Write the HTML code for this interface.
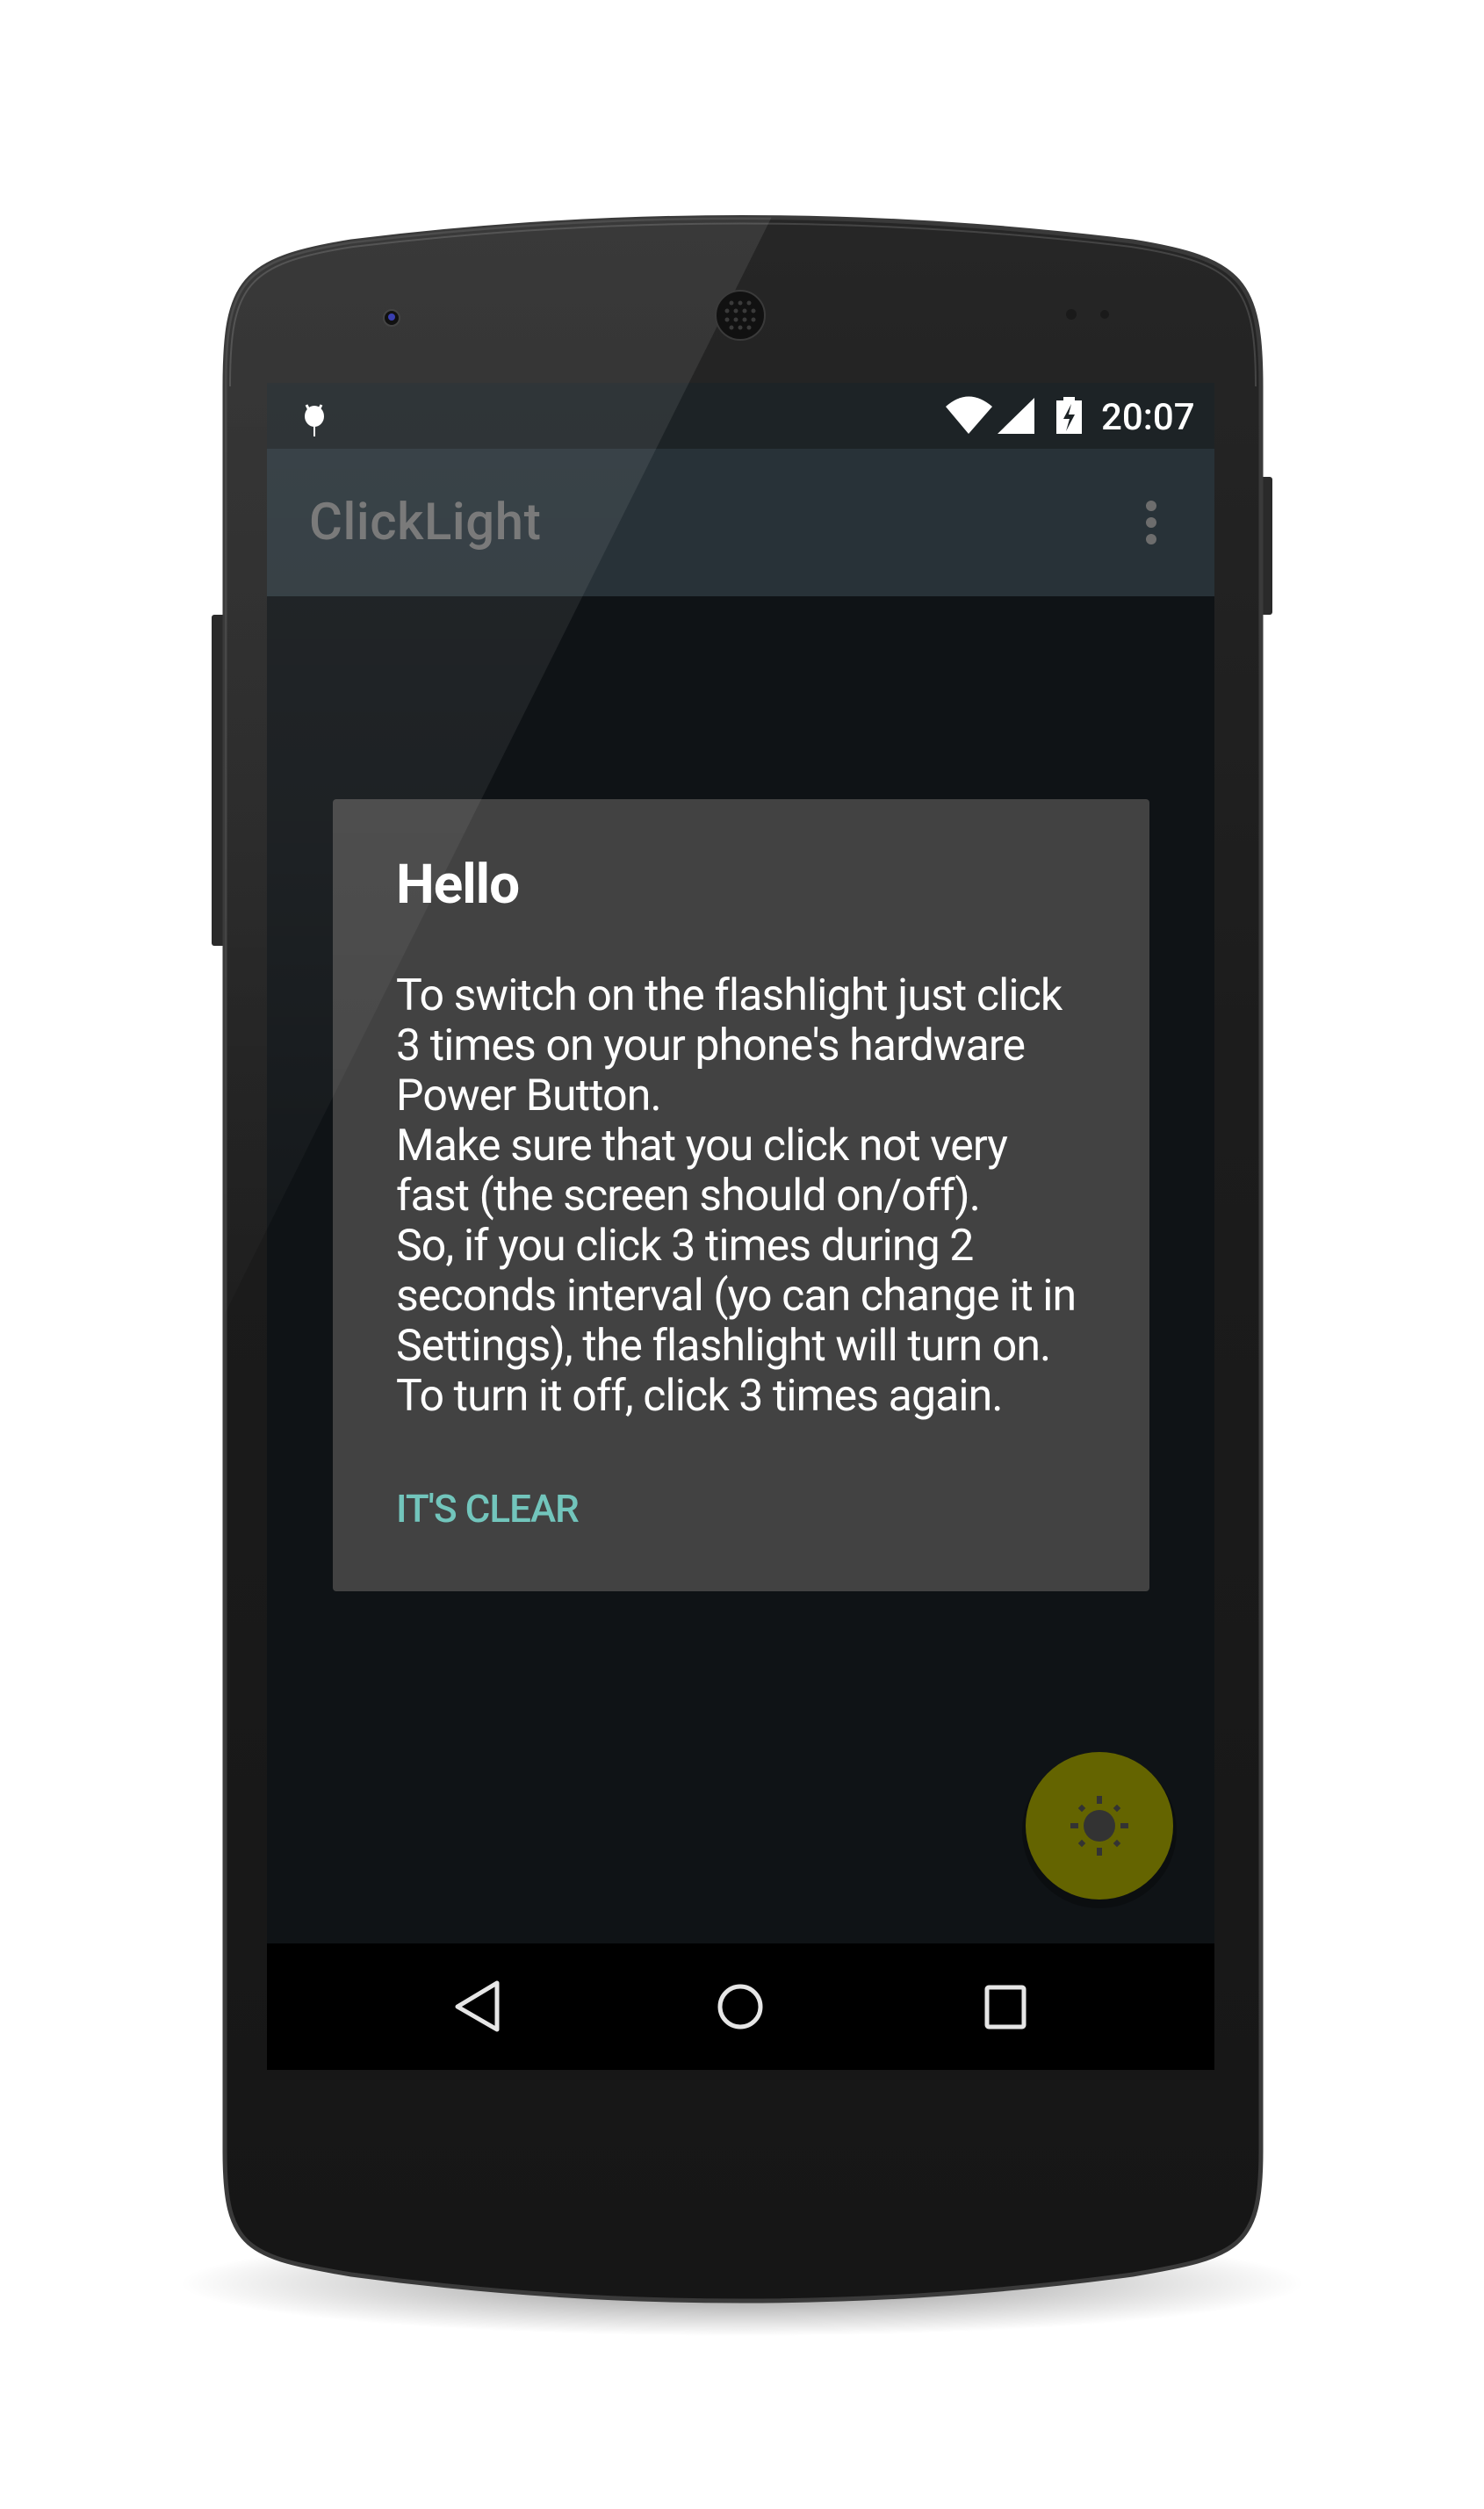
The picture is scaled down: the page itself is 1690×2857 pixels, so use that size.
<!DOCTYPE html>
<html><head><meta charset="utf-8"><style>
html,body{margin:0;padding:0;background:#fff;}
body{width:1690px;height:2857px;position:relative;overflow:hidden;font-family:"Roboto","Liberation Sans",sans-serif;}
.abs{position:absolute;}
.txt{position:absolute;white-space:nowrap;color:#fff;}
</style></head><body>
<svg class="abs" style="left:0;top:0" width="1690" height="2857" viewBox="0 0 1690 2857">
<defs>
<radialGradient id="sh" cx="0.5" cy="0.5" r="0.5">
<stop offset="0" stop-color="#000" stop-opacity="0.45"/>
<stop offset="1" stop-color="#000" stop-opacity="0"/>
</radialGradient>
<linearGradient id="body" x1="0" y1="0" x2="0" y2="1">
<stop offset="0" stop-color="#262626"/>
<stop offset="0.4" stop-color="#1c1c1c"/>
<stop offset="1" stop-color="#161616"/>
</linearGradient>
<linearGradient id="gl" gradientUnits="userSpaceOnUse" x1="0" y1="240" x2="0" y2="1700">
<stop offset="0" stop-color="#fff" stop-opacity="0.09"/>
<stop offset="0.5" stop-color="#fff" stop-opacity="0.06"/>
<stop offset="1" stop-color="#fff" stop-opacity="0"/>
</linearGradient>
<clipPath id="glare"><polygon points="0,0 1002,0 -120,2250 0,2250"/></clipPath>
</defs>
<ellipse cx="845" cy="2600" rx="640" ry="60" fill="url(#sh)"/>
<rect x="241" y="700" width="16" height="377" rx="3" fill="#2a2a2a"/>
<rect x="1434" y="543" width="15" height="157" rx="3" fill="#2a2a2a"/>
<path d="M256,440 C256,320 275,295 400,275 Q845,220 1290,275 C1415,295 1436,320 1436,440 L1436,2450 C1436,2560 1410,2570 1290,2590 Q845,2650 400,2590 C280,2570 256,2560 256,2450 Z" fill="url(#body)" stroke="#3a3a3a" stroke-width="5"/>
<path d="M262,440 C262,325 280,300 402,281 Q845,228 1288,281 C1410,300 1430,325 1430,440" fill="none" stroke="#444" stroke-width="2"/>
<rect x="304" y="436" width="1079" height="75" fill="#1d2326"/>
<rect x="304" y="511" width="1079" height="168" fill="#283238"/>
<rect x="304" y="679" width="1079" height="1534" fill="#0f1316"/>
<rect x="304" y="2213" width="1079" height="144" fill="#000"/>
<rect x="379" y="910" width="930" height="902" rx="4" fill="#424242"/>
<g clip-path="url(#glare)">
<path d="M256,440 C256,320 275,295 400,275 Q845,220 1290,275 L1290,2213 L256,2213 Z" fill="url(#gl)"/>
</g>
<circle cx="446" cy="362" r="9" fill="#111" stroke="#444" stroke-width="2"/>
<circle cx="446" cy="361" r="4" fill="#3a3fb0"/>
<circle cx="843" cy="359" r="28" fill="#111" stroke="#3a3a3a" stroke-width="2"/>
<g fill="#3a3a3a">
<circle cx="833" cy="345" r="2.5"/><circle cx="843" cy="345" r="2.5"/><circle cx="853" cy="345" r="2.5"/>
<circle cx="828" cy="354" r="2.5"/><circle cx="838" cy="354" r="2.5"/><circle cx="848" cy="354" r="2.5"/><circle cx="858" cy="354" r="2.5"/>
<circle cx="828" cy="364" r="2.5"/><circle cx="838" cy="364" r="2.5"/><circle cx="848" cy="364" r="2.5"/><circle cx="858" cy="364" r="2.5"/>
<circle cx="833" cy="373" r="2.5"/><circle cx="843" cy="373" r="2.5"/><circle cx="853" cy="373" r="2.5"/>
</g>
<circle cx="1220" cy="358" r="6" fill="#1a1a1a"/><circle cx="1258" cy="358" r="5" fill="#1a1a1a"/>
<g fill="#fff">
<path d="M349,461 l3,6 M366,461 l-3,6" stroke="#fff" stroke-width="3"/>
<ellipse cx="358" cy="474" rx="11" ry="12"/>
<rect x="357" y="484" width="2" height="13"/>
<path d="M1077,463 Q1103,440 1130,463 L1103,494 Z"/>
<path d="M1136,494 L1178,453 L1178,494 Z"/>
<rect x="1203" y="456" width="29" height="38"/><rect x="1211" y="452" width="13" height="5"/>
</g>
<path d="M1220,460 L1211,477 L1218,477 L1214,491 L1224,472 L1217,472 Z" fill="#1d2326"/>
<g fill="#6d6d6d"><circle cx="1311" cy="576" r="6"/><circle cx="1311" cy="595" r="6"/><circle cx="1311" cy="614" r="6"/></g>
<circle cx="1252" cy="2085" r="88" fill="#000" opacity="0.25"/>
<circle cx="1252" cy="2079" r="84" fill="#646400"/>
<g fill="#333">
<circle cx="1252" cy="2079" r="18"/>
<rect x="1249" y="2045" width="6" height="9"/><rect x="1249" y="2104" width="6" height="9"/>
<rect x="1219" y="2076" width="9" height="6"/><rect x="1276" y="2076" width="9" height="6"/>
<rect x="1229" y="2056" width="6" height="6" transform="rotate(45 1232 2059)"/>
<rect x="1269" y="2056" width="6" height="6" transform="rotate(45 1272 2059)"/>
<rect x="1229" y="2096" width="6" height="6" transform="rotate(45 1232 2099)"/>
<rect x="1269" y="2096" width="6" height="6" transform="rotate(45 1272 2099)"/>
</g>
<path d="M566,2258 L566,2311 L521,2285 Z" fill="none" stroke="#e6e6e6" stroke-width="5" stroke-linejoin="round"/>
<circle cx="843" cy="2285" r="23" fill="none" stroke="#e6e6e6" stroke-width="5"/>
<rect x="1124" y="2263" width="42" height="45" rx="2" fill="none" stroke="#e6e6e6" stroke-width="5"/>
</svg>
<div class="txt" style="left:1254px;top:448px;font-size:42px;line-height:56px;font-weight:500;">20:07</div>
<div class="txt" style="left:352px;top:556px;font-size:58px;line-height:78px;color:#7a7a7a;font-weight:500;letter-spacing:0.6px;">ClickLight</div>
<div class="txt" style="left:451px;top:968px;font-size:62px;line-height:80px;font-weight:bold;letter-spacing:-1px;">Hello</div>
<div class="txt" style="left:451px;top:1106px;font-size:50px;line-height:57px;letter-spacing:-0.9px;">To switch on the flashlight just click<br>3 times on your phone's hardware<br>Power Button.<br>Make sure that you click not very<br>fast (the screen should on/off).<br>So, if you click 3 times during 2<br>seconds interval (yo can change it in<br>Settings), the flashlight will turn on.<br>To turn it off, click 3 times again.</div>
<div class="txt" style="left:451px;top:1690px;font-size:44px;line-height:56px;color:#72c5bc;font-weight:500;letter-spacing:-1px;">IT'S CLEAR</div>
</body></html>
